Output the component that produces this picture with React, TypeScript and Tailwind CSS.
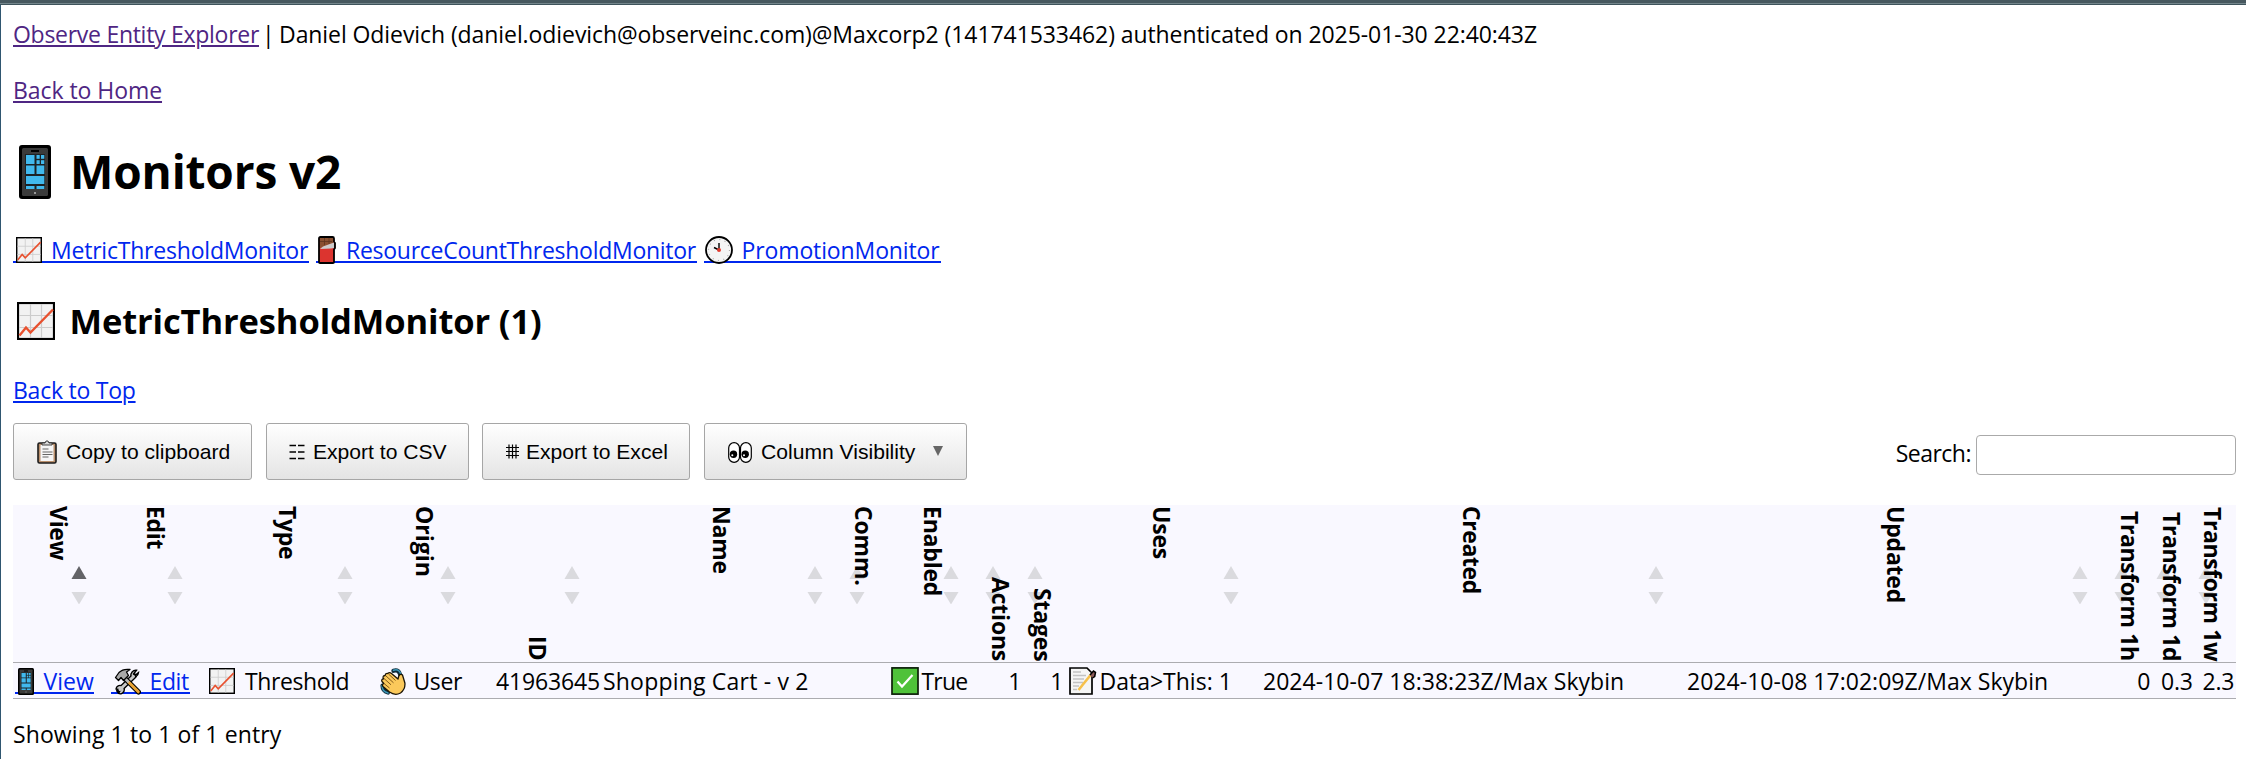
import React from "react";

type IconProps = { className: string };

function Phone({ className }: IconProps) {
  return (
    <svg viewBox="0 0 32 54" preserveAspectRatio="none" className={className}>
      <rect width="32" height="54" rx="3" fill="#000" />
      <rect x="3" y="3" width="26" height="48" rx="1.5" fill="#3b3b3b" />
      <rect x="12" y="5" width="8" height="2" fill="#000" />
      <rect x="6" y="9" width="20" height="35" fill="#1d2226" />
      <g fill="#41b9ee">
        <rect x="7" y="10" width="8.500" height="9" />
        <rect x="17.500" y="10" width="3.200" height="3.800" />
        <rect x="22" y="10" width="3.300" height="3.800" />
        <rect x="17.500" y="15.200" width="3.200" height="3.800" />
        <rect x="22" y="15.200" width="3.300" height="3.800" />
        <rect x="7" y="20.500" width="8.500" height="8.500" />
        <rect x="17.500" y="20.500" width="7.800" height="8.500" />
        <rect x="7" y="31" width="18.300" height="8" />
        <rect x="7" y="41" width="8.500" height="3" />
        <rect x="17.500" y="41" width="7.800" height="3" />
      </g>
      <rect x="15" y="47" width="2" height="2" fill="#999" />
    </svg>
  );
}

function Chart({ className }: IconProps) {
  return (
    <svg viewBox="0 0 38 38" preserveAspectRatio="none" className={className}>
      <rect x="1" y="1" width="36" height="36" fill="#f2f2f2" stroke="#000" strokeWidth="2.2" />
      <path d="M13.500 2v34M24.500 2v34M2 13.500h34M2 25.500h34" stroke="#ccc" strokeWidth="1.200" fill="none" />
      <path d="M2.500 33.500 9 25.500l4.500 5L36 7.500" stroke="#e8512f" strokeWidth="2.400" fill="none" />
    </svg>
  );
}

function Chocolate({ className }: IconProps) {
  return (
    <svg viewBox="0 0 18 28" className={className}>
      <path d="M1 13V2.500Q1 1 2.500 1h12Q16 1 16 2.500V6l1 1v5l-1 1.500V26q0 1-1 1H2q-1 0-1-1z" fill="#dc342f" stroke="#000" strokeWidth="1.800" />
      <path d="M2 12V2h13v5L2 12z" fill="#8a5030" />
      <path d="M6.500 2v7M11 2v6M2 5.500h12" stroke="#5f3520" strokeWidth=".8" />
      <path d="M2 13l3-2.500L16 6.500V12l-3 .5z" fill="#ccc" />
    </svg>
  );
}

function Clock({ className }: IconProps) {
  return (
    <svg viewBox="0 0 28 28" className={className}>
      <circle cx="14" cy="14" r="13" fill="#f4f4f4" stroke="#000" strokeWidth="1.800" />
      <circle cx="14" cy="14" r="10.500" fill="none" stroke="#aaa" strokeWidth="1.200" strokeDasharray="1 4.500" />
      <path d="M14 14V7M14 14l-5-2.500" stroke="#000" strokeWidth="1.400" />
      <circle cx="14" cy="14" r="2" fill="#e23c30" />
    </svg>
  );
}

function Clipboard({ className }: IconProps) {
  return (
    <svg viewBox="0 0 20 24" className={className}>
      <rect x="1" y="3" width="18" height="20" rx="1.500" fill="#b98f6c" stroke="#1c1c1c" strokeWidth="1.600" />
      <rect x="3.500" y="5" width="13" height="16" fill="#f6f6f6" />
      <path d="M5 5V3h3l1-2h2l1 2h3v2z" fill="#d8d8d8" stroke="#333" strokeWidth=".9" />
      <path d="M5.500 9h6M5.500 12h10M5.500 14.500h10M5.500 17h6" stroke="#666" strokeWidth="1.100" />
    </svg>
  );
}

function Trigram({ className }: IconProps) {
  return (
    <svg viewBox="0 0 16 16" className={className}>
      <path d="M.5 1.500H7M9 1.500h6.500M.5 8H7M9 8h6.500M.5 14.500H7M9 14.500h6.500" stroke="#000" strokeWidth="1.300" />
    </svg>
  );
}

function Viewdata({ className }: IconProps) {
  return (
    <svg viewBox="0 0 13 15" className={className}>
      <path d="M3 .5v14M6.500.5v14M10 .5v14M0 3.500h13M0 7.500h13M0 11.500h13" stroke="#000" strokeWidth="1.200" />
    </svg>
  );
}

function Eyes({ className }: IconProps) {
  return (
    <svg viewBox="0 0 24 21" className={className}>
      <g fill="#fff" stroke="#000" strokeWidth="1.200">
        <rect x=".7" y=".7" width="10.800" height="19.600" rx="5.400" />
        <rect x="12.500" y=".7" width="10.800" height="19.600" rx="5.400" />
      </g>
      <circle cx="5.500" cy="12.200" r="3.700" />
      <circle cx="17.200" cy="12.200" r="3.700" />
      <circle cx="4.300" cy="13.200" r="1" fill="#fff" />
      <circle cx="16" cy="13.200" r="1" fill="#fff" />
    </svg>
  );
}

function Tools({ className }: IconProps) {
  return (
    <svg viewBox="0 0 27 27" className={className}>
      <g fill="none" strokeLinecap="round">
        <path d="M5 22.500 20 8" stroke="#000" strokeWidth="5.600" />
        <path d="M24.500 4.500 21 7.500 19.500 6l3-3.700A5 5 0 0 0 17 8.500 5 5 0 0 0 24.500 4.500z" fill="#c8c8c8" stroke="#000" strokeWidth="1.400" />
        <path d="M2 21a4 4 0 0 1 6-3 4 4 0 0 1-3.500 7.300L6.500 22z" fill="#c8c8c8" stroke="#000" strokeWidth="1.400" />
        <path d="M6 21.500 19.500 8.500" stroke="#c8c8c8" strokeWidth="3" />
        <path d="M10 9.500 24.500 24" stroke="#000" strokeWidth="5" />
        <path d="M14.500 14 24.300 23.800" stroke="#eba433" strokeWidth="3" />
        <path d="M9.500 9 14 13.500" stroke="#bbb" strokeWidth="2.600" />
      </g>
      <path d="M1.500 9.500 5 4.500Q9 .5 16 1.500L12.500 4l2 3.500-5 5L7 9.500l-2.500 3z" fill="#a9a9a9" stroke="#000" strokeWidth="1.300" strokeLinejoin="round" />
    </svg>
  );
}

function Wave({ className }: IconProps) {
  return (
    <svg viewBox="0 0 26 27" className={className}>
      <g fill="none" stroke="#0f2c3a" strokeWidth="4.200" strokeLinecap="round">
        <path d="M13.500 2.800q5.500-1.800 7 4.700" />
        <path d="M2.500 17.500q0 5.500 5.500 7" />
      </g>
      <g fill="none" stroke="#3c97b8" strokeWidth="1.500" strokeLinecap="round">
        <path d="M13.500 2.200q6.500-1.800 7.500 5" />
        <path d="M2 17.500q0 6 6 7.500" />
      </g>
      <path
        d="M9.500 24 3 18.500q-1.500-2 .8-3L2 13.500q-1-2.300 1.500-2.600L3.200 10q-.6-2.400 2-2.500.2-2.300 2.600-2Q9.500 3.800 11.500 5.500L18 11l.8-3q1.500-2.600 3.700-1l2.400 8q.6 6.500-4.400 10-5.500 3-11-1z"
        fill="#fbc95b"
        stroke="#1b1405"
        strokeWidth="1.300"
        strokeLinejoin="round"
      />
      <path d="m4 10.500 7 6.300M5.800 7.800l7.700 7M8.500 6l7 6.500M4 15.500l5.500 4.500" stroke="#80591a" strokeWidth="1" fill="none" />
    </svg>
  );
}

function Check({ className }: IconProps) {
  return (
    <svg viewBox="0 0 28 28" className={className}>
      <rect x="1" y=".9" width="26" height="26.200" fill="#4fc23a" stroke="#0d1f0a" strokeWidth="1.700" />
      <path d="M6.500 14.500l4.500 5L21.500 8" fill="none" stroke="#fff" strokeWidth="2.200" />
    </svg>
  );
}

function Memo({ className }: IconProps) {
  return (
    <svg viewBox="0 0 28 28" className={className}>
      <path d="M1 1h17l5 5v21H1z" fill="#f5f5f5" stroke="#000" strokeWidth="1.700" />
      <path d="M4 5h8M4 8.500h13M4 12h11M4 15.500h10M4 19h6M4 22.500h4" stroke="#c2c2c2" strokeWidth="1.300" />
      <path d="M9.500 23 22 7.500" stroke="#f6c04a" strokeWidth="2.600" />
      <path d="M21 8l3.500-4 2 1.300-.8 4.200-2.200 1.500" fill="#8b5a5a" stroke="#000" strokeWidth="1.500" />
    </svg>
  );
}

const link = "underline decoration-2 underline-offset-[2px]";
const iconLink =
  "relative isolate flex h-8 items-center text-[#0027ee] before:absolute before:inset-x-0 before:top-[27px] before:-z-10 before:h-0.5 before:bg-[#0027ee]";

type Column = { label: string; end?: boolean; sorted?: boolean; tracking: string };

const columns: Column[] = [
  { label: "View", sorted: true, tracking: "tracking-[-0.3px]" },
  { label: "Edit", tracking: "tracking-[-0.3px]" },
  { label: "Type", tracking: "tracking-[-0.3px]" },
  { label: "Origin", tracking: "" },
  { label: "ID", end: true, tracking: "" },
  { label: "Name", tracking: "tracking-[-0.2px]" },
  { label: "Comm.", tracking: "tracking-[-0.2px]" },
  { label: "Enabled", tracking: "tracking-[-0.2px]" },
  { label: "Actions", end: true, tracking: "tracking-[-0.2px]" },
  { label: "Stages", end: true, tracking: "tracking-[-0.2px]" },
  { label: "Uses", tracking: "tracking-[-0.2px]" },
  { label: "Created", tracking: "tracking-[-0.4px]" },
  { label: "Updated", tracking: "tracking-[-0.2px]" },
  { label: "Transform 1h", end: true, tracking: "tracking-[-0.4px]" },
  { label: "Transform 1d", end: true, tracking: "tracking-[-0.4px]" },
  { label: "Transform 1w", end: true, tracking: "tracking-[-0.4px]" },
];

const gridColumns =
  "grid grid-cols-[96.5px_96px_169.5px_103px_124px_243px_42.5px_94px_42px_42px_196px_424.5px_424.5px_42px_42px_41.5px]";

function HeaderCell({ label, end, sorted, tracking }: Column) {
  return (
    <div className={`relative flex justify-center pt-px pr-[4px] ${end ? "items-end pb-px" : "items-start"}`}>
      <svg viewBox="0 0 16 38" className="absolute top-[61px] right-[22.5px] h-[38px] w-4">
        <path d="M8 0l7.500 13H.5z" fill={sorted ? "#636367" : "#dadade"} />
        <path d="M.5 26h15L8 38.500z" fill="#dadade" />
      </svg>
      <span className={`relative text-[23px] leading-8 font-bold whitespace-nowrap [writing-mode:vertical-rl] ${tracking}`}>
        {label}
      </span>
    </div>
  );
}

const button =
  "flex h-[57px] items-center rounded-[3px] border border-[#a6a6a6] bg-linear-to-b from-white to-[#e4e4e4] font-['Liberation_Sans',Arial,sans-serif] text-[21.1px] whitespace-nowrap";

export default function App() {
  return (
    <div className="h-[759px] w-[2246px] overflow-hidden bg-white font-['Open_Sans','Noto_Sans',sans-serif] text-[23px] leading-8 text-black">
      <div className="h-[5px] border-b border-[#3f545c] bg-[#47585f]">
        <div className="h-[3px]" />
        <div className="h-px bg-[#74868c]" />
      </div>
      <div className="h-[754px] border-l border-[#2f5670] pt-[13px] pr-[10px] pl-3">
        <div className="flex h-8 gap-[3px] whitespace-nowrap">
          <a className={`${link} tracking-[-0.28px] text-[#4f2683]`}>Observe Entity Explorer</a>
          <span className="tracking-[-0.08px]">
            <span className="tracking-[-0.8px]">| </span>
            Daniel Odievich (daniel.odievich@observeinc.com)@Maxcorp2 (141741533462) authenticated on 2025-01-30 22:40:43Z
          </span>
        </div>
        <div className="mt-6 h-8">
          <a className={`${link} tracking-[-0.06px] text-[#4f2683]`}>Back to Home</a>
        </div>
        <h1 className="mt-[33px] flex h-16 text-[46px] leading-[64px] font-bold tracking-[-0.15px]">
          <Phone className="mt-[6px] mr-[19px] ml-[6px] h-[54px] w-8" />
          Monitors v2
        </h1>
        <nav className="mt-[31px] flex h-8 gap-[7px]">
          <a className={`${iconLink} w-[295.5px] tracking-[-0.21px]`}>
            <Chart className="mr-[9px] ml-[3px] h-[26px] w-[26px]" />
            MetricThresholdMonitor
          </a>
          <a className={`${iconLink} w-[381px] tracking-[-0.27px]`}>
            <Chocolate className="mr-[10px] ml-[2.5px] h-7 w-[18px]" />
            ResourceCountThresholdMonitor
          </a>
          <a className={`${iconLink} w-[237px] tracking-[-0.12px]`}>
            <Clock className="mr-[9px] ml-px h-7 w-7" />
            PromotionMonitor
          </a>
        </nav>
        <h2 className="mt-[31px] flex h-12 text-[34.5px] leading-[48px] font-bold tracking-[-0.12px]">
          <Chart className="mt-[5px] mr-[14.5px] ml-[4px] h-[38px] w-[38px]" />
          MetricThresholdMonitor (1)
        </h2>
        <div className="mt-[29px] h-8">
          <a className={`${link} tracking-[-0.25px] text-[#0027ee]`}>Back to Top</a>
        </div>
        <div className="mt-[17px] flex h-[57px]">
          <button className={`${button} w-[239px] pl-[23px]`}>
            <Clipboard className="mr-[9px] h-6 w-5" />
            Copy to clipboard
          </button>
          <button className={`${button} ml-[14px] w-[203px] pl-[22px]`}>
            <Trigram className="mr-[8px] h-4 w-4" />
            Export to CSV
          </button>
          <button className={`${button} ml-[13px] w-[208px] pl-[23px]`}>
            <Viewdata className="mr-[7px] h-[15px] w-[13px]" />
            Export to Excel
          </button>
          <button className={`${button} ml-[14px] w-[263px] pl-[23px]`}>
            <Eyes className="mt-[2px] mr-[9px] h-[21px] w-6" />
            Column Visibility
            <svg viewBox="0 0 10 10" className="mb-px ml-[18px] size-[10px]">
              <path d="M0 0h10L5 10z" fill="#666" />
            </svg>
          </button>
          <label className="mt-[14px] ml-auto mr-[5px] h-8 tracking-[-0.5px]">Search:</label>
          <input className="mt-3 h-10 w-[260px] rounded-[4px] border border-[#aaa] bg-white px-2" />
        </div>
        <div className="mt-[25px] bg-[#f9f8ff]">
          <div className={`${gridColumns} h-[158px] border-b border-[#acacb0]`}>
            {columns.map((c) => (
              <HeaderCell key={c.label} {...c} />
            ))}
          </div>
          <div className={`${gridColumns} h-9 border-b border-[#acacb0] whitespace-nowrap [&>div]:flex [&>div]:h-[35px] [&>div]:items-center [&>div]:pt-px`}>
            <div className="pl-[1.5px]">
              <a className={`${iconLink} w-[79.5px]`}>
                <Phone className="mr-[10px] ml-[3px] h-[27px] w-4" />
                View
              </a>
            </div>
            <div className="pl-px">
              <a className={`${iconLink} w-[79.5px] tracking-[-0.4px]`}>
                <Tools className="mr-[9px] ml-[3px] size-[27px]" />
                Edit
              </a>
            </div>
            <div className="pl-[3.5px] tracking-[-0.4px]">
              <Chart className="mr-[10px] size-[26px]" />
              Threshold
            </div>
            <div className="pl-[4.5px] tracking-[-0.4px]">
              <Wave className="mr-[8px] h-[27px] w-[26px]" />
              User
            </div>
            <div className="justify-end pr-[2px] tracking-[-0.15px]">41963645</div>
            <div className="pl-px tracking-[0.2px]">Shopping Cart - v 2</div>
            <div />
            <div className="pl-[3px] tracking-[-0.8px]">
              <Check className="mr-[3px] size-7" />
              True
            </div>
            <div className="justify-end pr-[2px]">1</div>
            <div className="justify-end pr-[2px]">1</div>
            <div className="pl-[3px]">
              <Memo className="mr-[3px] size-7" />
              Data&gt;This: 1
            </div>
            <div className="pl-[1.5px] tracking-[0.03px]">2024-10-07 18:38:23Z/Max Skybin</div>
            <div className="pl-px tracking-[0.03px]">2024-10-08 17:02:09Z/Max Skybin</div>
            <div className="justify-end pr-[2px]">0</div>
            <div className="justify-end pr-[2px] tracking-[-0.3px]">0.3</div>
            <div className="justify-end pr-[2px] tracking-[-0.3px]">2.3</div>
          </div>
        </div>
        <div className="mt-[19px] tracking-[0.1px]">Showing 1 to 1 of 1 entry</div>
      </div>
    </div>
  );
}
